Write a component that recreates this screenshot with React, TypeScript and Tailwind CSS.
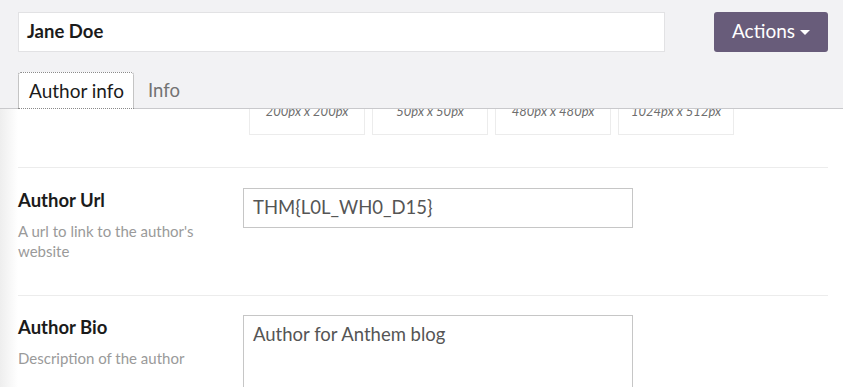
const sizes = ["200px x 200px", "50px x 50px", "480px x 480px", "1024px x 512px"];

function FieldRow({ label, hint, children, last }: { label: string; hint: string; children: React.ReactNode; last?: boolean }) {
  return (
    <div className={`flex ${last ? "pt-[19px]" : "pt-[20px] pb-[34px] border-b border-[#ececec]"}`}>
      <div className="w-[225px] shrink-0">
        <div className="mt-[1px] text-[18.5px] leading-[22px] font-bold text-[#1b1b1b]">{label}</div>
        <div className="mt-[10px] w-[195px] text-[15px] leading-5 text-[#9a9a9a]">{hint}</div>
      </div>
      {children}
    </div>
  );
}

export default function App() {
  return (
    <div className="w-[843px] h-[387px] overflow-hidden bg-white flex flex-col" style={{ fontFamily: "Lato, 'Open Sans', sans-serif" }}>
      {/* header */}
      <div className="h-[109px] shrink-0 bg-[#f2f2f4] border-b border-[#c9c9cc] pl-[18px] pr-[15px] pt-[12px] flex flex-col">
        <div className="flex items-center">
          <div className="w-[647px] h-[40px] bg-white border border-[#e2e2e4] flex items-center px-[8px] pb-[2px]">
            <span className="text-[18.5px] leading-[22px] font-bold text-[#1b1b1b]">Jane Doe</span>
          </div>
          <button className="ml-auto w-[114px] h-[40px] rounded-[3px] bg-[#685c7a] text-white text-[19px] leading-[22px] flex items-center justify-center gap-[5px] pb-[2px]">
            Actions
            <span className="w-0 h-0 border-l-[5px] border-r-[5px] border-t-[5px] border-l-transparent border-r-transparent border-t-white mt-[2px]" />
          </button>
        </div>
        <div className="mt-[20px] flex items-end">
          <div className="h-[37px] mb-[-1px] w-[116px] bg-white rounded-t-[3px] border border-dotted border-[#8a8a8a] flex items-center pl-[10px] text-[19px] leading-[22px] text-[#1b1b1b]">
            Author info
          </div>
          <div className="h-[36px] flex items-center pl-[14px] text-[18.5px] leading-[22px] text-[#737373]">Info</div>
        </div>
      </div>

      {/* content */}
      <div className="flex flex-1 overflow-hidden">
        <div className="w-[18px] shrink-0 bg-gradient-to-r from-[#eeeeee] to-white" />
        <div className="w-[810px] flex flex-col">
          <div className="flex pl-[231px] gap-[7px] pb-[32px] border-b border-[#ececec]">
            {sizes.map(s => (
              <div key={s} className="w-[116px] h-[50px] mt-[-24px] border border-[#ececec] flex items-end justify-center pb-[15px] text-[13px] leading-4 italic text-[#6e6e6e]">
                {s}
              </div>
            ))}
          </div>
          <FieldRow label="Author Url" hint="A url to link to the author's website">
            <div className="w-[390px] h-[40px] border border-[#c6c6c6] flex items-center px-[9px] pb-[2px] text-[18.5px] leading-[22px] text-[#555]">
              THM{"{"}L0L_WH0_D15{"}"}
            </div>
          </FieldRow>
          <FieldRow label="Author Bio" hint="Description of the author" last>
            <div className="w-[390px] h-[100px] border border-[#c6c6c6] px-[9px] pt-[7px] text-[18.5px] leading-[22px] text-[#555]">
              Author for Anthem blog
            </div>
          </FieldRow>
        </div>
      </div>
    </div>
  );
}
